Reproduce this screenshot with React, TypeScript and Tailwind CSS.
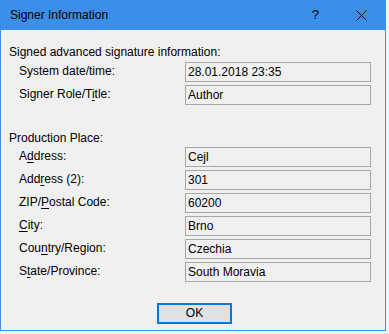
import React from 'react';

const font = { fontFamily: '"Liberation Sans", Arial, sans-serif' };

const Field: React.FC<{ label: React.ReactNode; value: string }> = ({ label, value }) => (
  <div className="flex items-start h-[20px]">
    <div className="w-[184px] pl-[18px] pt-[1px] leading-[16px] text-black">{label}</div>
    <div className="w-[186px] h-[20px] border border-[#a6a6a6] bg-[#f0f0f0] px-[2px] leading-[18px] text-black">
      {value}
    </div>
  </div>
);

const U: React.FC<{ children: React.ReactNode }> = ({ children }) => (
  <span className="underline underline-offset-[2px] decoration-1">{children}</span>
);

export default function App() {
  return (
    <div className="w-[389px] h-[334px] bg-[#f4f4f4] text-[12px]" style={font}>
      <div className="w-[386px] h-[331px] flex flex-col bg-[#f0f0f0] border-x border-b border-[#3c8ee8]">
        {/* title bar */}
        <div className="h-[30px] shrink-0 -mx-px bg-[#3c8ee8] flex items-center pl-[10px] pr-[19px]">
          <span className="text-black leading-[16px]">Signer Information</span>
          <span className="ml-auto mr-[37px] text-black text-[13px] leading-[16px]">?</span>
          <svg width="11" height="11" viewBox="0 0 11 11" className="text-black">
            <path d="M0.5 0.5 L10.5 10.5 M10.5 0.5 L0.5 10.5" stroke="currentColor" strokeWidth="1" fill="none" />
          </svg>
        </div>

        <div className="flex flex-col pt-[14px]">
          <div className="pl-[8px] leading-[16px] text-black">Signed advanced signature information:</div>
          <div className="flex flex-col gap-[3px] mt-[2px]">
            <Field label="System date/time:" value="28.01.2018 23:35" />
            <Field label={<>Signer Role/T<U>i</U>tle:</>} value="Author" />
          </div>

          <div className="pl-[8px] mt-[25px] leading-[16px] text-black">Production Place:</div>
          <div className="flex flex-col gap-[3px] mt-[1px]">
            <Field label={<>A<U>d</U>dress:</>} value="Cejl" />
            <Field label={<>Add<U>r</U>ess (2):</>} value="301" />
            <Field label={<>ZIP/<U>P</U>ostal Code:</>} value="60200" />
            <Field label={<><U>C</U>ity:</>} value="Brno" />
            <Field label={<>Cou<U>n</U>try/Region:</>} value="Czechia" />
            <Field label={<>S<U>t</U>ate/Province:</>} value="South Moravia" />
          </div>

          <div className="flex mt-[21px] pl-[156px]">
            <div className="w-[75px] h-[21px] border-2 border-[#0078d7] bg-[#e1e1e1] text-black leading-[17px] text-center">
              OK
            </div>
          </div>
        </div>
      </div>
    </div>
  );
}
